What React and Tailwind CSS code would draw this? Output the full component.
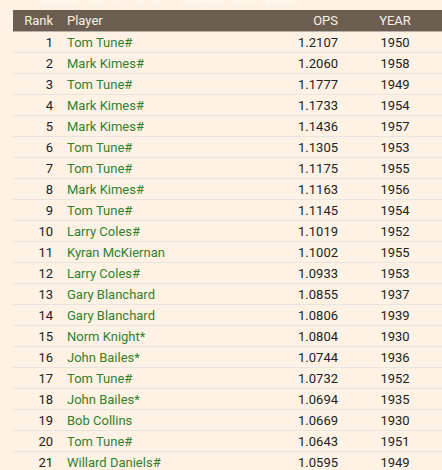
import React from "react";

const rows = [
  [1, "Tom Tune#", "1.2107", "1950"],
  [2, "Mark Kimes#", "1.2060", "1958"],
  [3, "Tom Tune#", "1.1777", "1949"],
  [4, "Mark Kimes#", "1.1733", "1954"],
  [5, "Mark Kimes#", "1.1436", "1957"],
  [6, "Tom Tune#", "1.1305", "1953"],
  [7, "Tom Tune#", "1.1175", "1955"],
  [8, "Mark Kimes#", "1.1163", "1956"],
  [9, "Tom Tune#", "1.1145", "1954"],
  [10, "Larry Coles#", "1.1019", "1952"],
  [11, "Kyran McKiernan", "1.1002", "1955"],
  [12, "Larry Coles#", "1.0933", "1953"],
  [13, "Gary Blanchard", "1.0855", "1937"],
  [14, "Gary Blanchard", "1.0806", "1939"],
  [15, "Norm Knight*", "1.0804", "1930"],
  [16, "John Bailes*", "1.0744", "1936"],
  [17, "Tom Tune#", "1.0732", "1952"],
  [18, "John Bailes*", "1.0694", "1935"],
  [19, "Bob Collins", "1.0669", "1930"],
  [20, "Tom Tune#", "1.0643", "1951"],
  [21, "Willard Daniels#", "1.0595", "1949"],
];

export default function App() {
  return (
    <div className="w-[442px] h-[470px] overflow-hidden bg-[#fdf2e4] font-['Roboto',sans-serif] text-[13px]">
      <div className="h-[10px] overflow-hidden pl-[27px]">
        <div className="mt-[-10px] leading-[16px] whitespace-nowrap text-[#fffaf4]">
          Indicates Hall of Fame, # indicates active player
        </div>
      </div>
      <div className="ml-[13px] w-[431px]">
        <div className="flex h-[22px] items-center bg-[#6b5e50] border-b border-[#b8b2aa] text-[#f6f0e8] leading-none">
          <div className="w-[40px] text-right">Rank</div>
          <div className="flex-1 pl-[14px]">Player</div>
          <div className="w-[60px] text-right">OPS</div>
          <div className="w-[86px] pl-[28px] text-center">YEAR</div>
          <div className="w-[20px]" />
        </div>
        {rows.map(([rank, name, ops, year]) => (
          <div
            key={rank}
            className="flex h-[21px] items-center border-b border-[#e8e4df] leading-none text-[#222222]"
          >
            <div className="w-[40px] text-right">{rank}</div>
            <div className="flex-1 pl-[14px] text-[#33802f]">{name}</div>
            <div className="w-[60px] text-right">{ops}</div>
            <div className="w-[86px] pl-[28px] text-center">{year}</div>
            <div className="w-[20px]" />
          </div>
        ))}
      </div>
    </div>
  );
}
